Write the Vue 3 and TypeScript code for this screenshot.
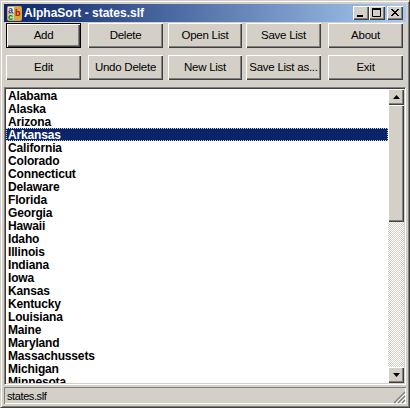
<template>
  <div class="window">
    <div class="titlebar">
      <svg class="app-icon" width="15" height="15" viewBox="0 0 15 15">
        <rect x="0" y="0" width="15" height="15" rx="2" fill="#d9a441" />
        <rect x="1" y="1" width="6" height="6" fill="#f4f1e4" />
        <rect x="1" y="8" width="6" height="6" fill="#bfe0a8" />
        <text x="1" y="7" class="icon-letter" fill="#1c2fc4">a</text>
        <text x="8" y="10" class="icon-letter" fill="#b01010">b</text>
        <text x="1" y="14" class="icon-letter" fill="#0a7a1e">c</text>
      </svg>
      <span class="title">AlphaSort - states.slf</span>
      <div class="caption-buttons">
        <button class="caption-btn">
          <svg width="10" height="10" viewBox="0 0 10 10"><rect x="1" y="7" width="6" height="2" fill="#000" /></svg>
        </button>
        <button class="caption-btn">
          <svg width="10" height="10" viewBox="0 0 10 10"><path d="M0.5 1.5h8v7h-8z" fill="none" stroke="#000" /><rect x="0" y="0" width="9" height="2" fill="#000" /></svg>
        </button>
        <button class="caption-btn close">
          <svg width="10" height="10" viewBox="0 0 10 10"><path d="M1 1l7 7M2 1l7 7M8 1l-7 7M9 1l-7 7" stroke="#000" fill="none" /></svg>
        </button>
      </div>
    </div>

    <div class="toolbar">
      <div v-for="(row, r) in buttonRows" :key="r" class="btn-row">
        <button
          v-for="(label, i) in row"
          :key="label"
          class="btn"
          :class="[`col-${i}`, { primary: label === 'Add' }]">
          {{ label }}
        </button>
      </div>
    </div>

    <div class="list-frame">
      <ul class="list">
        <li
          v-for="state in states"
          :key="state"
          class="item"
          :class="{ selected: state === 'Arkansas' }">
          {{ state }}
        </li>
      </ul>
      <div class="scrollbar">
        <div class="sb-btn">
          <svg width="7" height="4" viewBox="0 0 7 4"><path d="M3.5 0L7 4H0z" fill="#000" /></svg>
        </div>
        <div class="sb-thumb"></div>
        <div class="sb-track"></div>
        <div class="sb-btn">
          <svg width="7" height="4" viewBox="0 0 7 4"><path d="M0 0h7L3.5 4z" fill="#000" /></svg>
        </div>
      </div>
    </div>

    <div class="statusbar">
      <span class="status-text">states.slf</span>
      <svg class="grip" width="13" height="13" viewBox="0 0 13 13">
        <path d="M12 1L1 12M12 5L5 12M12 9L9 12" stroke="#808080" stroke-width="1.4" fill="none" />
        <path d="M12 3L3 12M12 7L7 12M12 11L11 12" stroke="#fff" stroke-width="1" fill="none" />
      </svg>
    </div>
  </div>
</template>

<script setup lang="ts">
const buttonRows: string[][] = [
  ["Add", "Delete", "Open List", "Save List", "About"],
  ["Edit", "Undo Delete", "New List", "Save List as...", "Exit"],
];

const states: string[] = [
  "Alabama", "Alaska", "Arizona", "Arkansas", "California", "Colorado",
  "Connecticut", "Delaware", "Florida", "Georgia", "Hawaii", "Idaho",
  "Illinois", "Indiana", "Iowa", "Kansas", "Kentucky", "Louisiana",
  "Maine", "Maryland", "Massachussets", "Michigan", "Minnesota",
];
</script>

<style scoped>
.window {
  width: 410px;
  height: 408px;
  box-sizing: border-box;
  display: flex;
  flex-direction: column;
  padding: 3px;
  background: #d4d0c8;
  border: 1px solid #404040;
  border-top-color: #d4d0c8;
  border-left-color: #d4d0c8;
  box-shadow: inset 1px 1px 0 #fff, inset -1px -1px 0 #808080;
  font-family: "Liberation Sans", Arial, sans-serif;
  overflow: hidden;
}

.titlebar {
  height: 18px;
  flex: none;
  display: flex;
  align-items: center;
  padding: 0 3px;
  background: linear-gradient(to right, #0a246a, #a6caf0);
}
.app-icon { flex: none; }
.icon-letter { font: bold 9px "Liberation Sans", sans-serif; }
.title {
  margin-left: 2px;
  color: #fff;
  font-weight: bold;
  font-size: 12px;
}
.caption-buttons {
  margin-left: auto;
  display: flex;
}
.caption-btn {
  width: 16px;
  height: 14px;
  padding: 0;
  display: flex;
  align-items: center;
  justify-content: center;
  background: #d4d0c8;
  border: none;
  box-shadow: inset 1px 1px 0 #fff, inset -1px -1px 0 #404040, inset -2px -2px 0 #808080;
}
.caption-btn.close { margin-left: 2px; }

.toolbar {
  flex: none;
  display: flex;
  flex-direction: column;
  gap: 7px;
  padding: 1px 2px 0;
}
.btn-row { display: flex; }
.btn {
  width: 75px;
  height: 25px;
  padding: 0 0 2px;
  background: #d4d0c8;
  border: none;
  box-shadow: inset 1px 1px 0 #fff, inset -1px -1px 0 #404040, inset -2px -2px 0 #808080;
  font-family: "Liberation Sans", Arial, sans-serif;
  font-size: 11.5px;
  letter-spacing: -0.25px;
  white-space: nowrap;
  color: #000;
}
.btn.primary {
  outline: 1px solid #000;
  outline-offset: -1px;
  box-shadow: inset 2px 2px 0 #fff, inset -2px -2px 0 #404040, inset -3px -3px 0 #808080;
}
.col-1 { margin-left: 7px; }
.col-2 { margin-left: 5px; width: 74px; }
.col-3 { margin-left: 4px; }
.col-4 { margin-left: 7px; }

.list-frame {
  flex: 1;
  min-height: 0;
  margin-top: 7px;
  display: flex;
  background: #fff;
  border: 1px solid #808080;
  border-right-color: #fff;
  border-bottom-color: #fff;
  box-shadow: inset 1px 1px 0 #404040, inset -1px -1px 0 #d4d0c8;
  padding: 1px;
}
.list {
  flex: 1;
  min-width: 0;
  margin: 0;
  padding: 0;
  list-style: none;
  overflow: hidden;
}
.item {
  height: 13px;
  line-height: 15px;
  padding-left: 2px;
  font-weight: bold;
  font-size: 12px;
  letter-spacing: -0.15px;
  color: #000;
}
.item.selected {
  background: #0a246a;
  color: #fff;
  outline: 1px dotted #d4d0c8;
  outline-offset: -1px;
}

.scrollbar {
  flex: none;
  width: 16px;
  display: flex;
  flex-direction: column;
}
.sb-btn {
  flex: none;
  height: 16px;
  display: flex;
  align-items: center;
  justify-content: center;
  background: #d4d0c8;
  box-shadow: inset 1px 1px 0 #fff, inset -1px -1px 0 #404040, inset -2px -2px 0 #808080;
}
.sb-thumb {
  flex: none;
  height: 117px;
  background: #d4d0c8;
  box-shadow: inset 1px 1px 0 #fff, inset -1px -1px 0 #404040, inset -2px -2px 0 #808080;
}
.sb-track {
  flex: 1;
  background-color: #fff;
  background-image: repeating-conic-gradient(#d4d0c8 0 25%, #fff 0 50%);
  background-size: 2px 2px;
}

.statusbar {
  flex: none;
  position: relative;
  height: 17px;
  margin-top: 2px;
  display: flex;
  align-items: center;
  box-shadow: inset 1px 1px 0 #808080, inset -1px -1px 0 #fff;
}
.status-text {
  padding-left: 3px;
  font-size: 11px;
  letter-spacing: -0.4px;
  color: #000;
}
.grip {
  position: absolute;
  right: 0;
  bottom: 0;
}
</style>

<style>
html, body { margin: 0; background: #d4d0c8; }
</style>
